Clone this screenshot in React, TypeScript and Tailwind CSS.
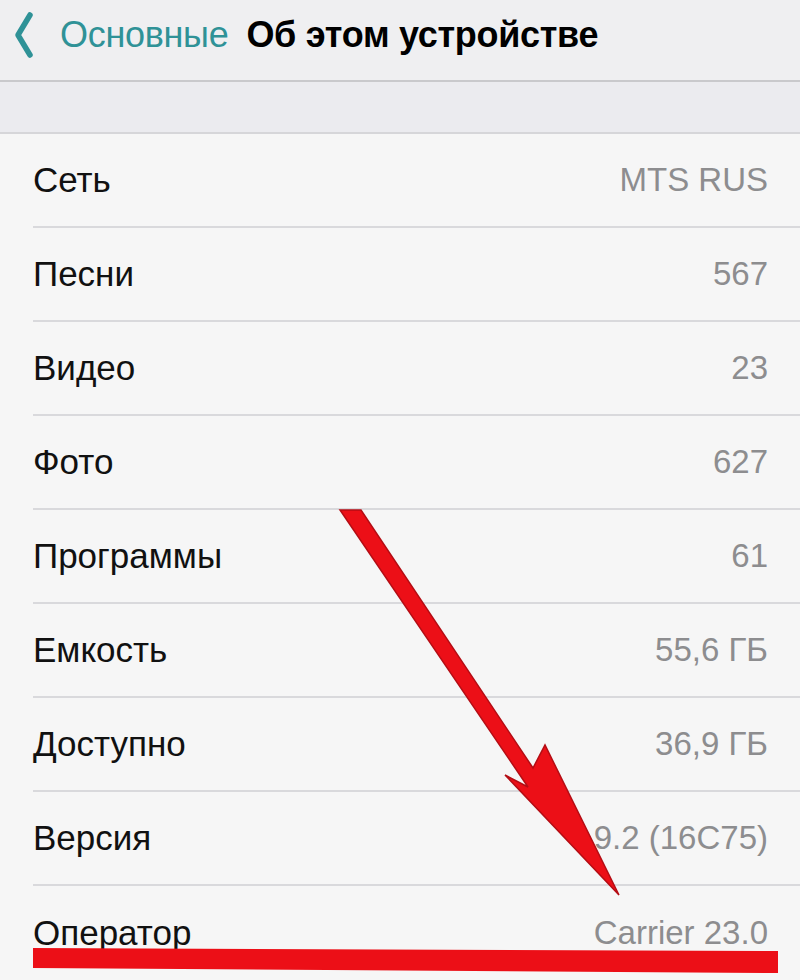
import React from 'react';

const rows: [string, string][] = [
  ['Сеть', 'MTS RUS'],
  ['Песни', '567'],
  ['Видео', '23'],
  ['Фото', '627'],
  ['Программы', '61'],
  ['Емкость', '55,6 ГБ'],
  ['Доступно', '36,9 ГБ'],
  ['Версия', '9.2 (16C75)'],
  ['Оператор', 'Carrier 23.0'],
];

export default function App() {
  return (
    <div className="relative w-[800px] h-[980px] overflow-hidden bg-[#f6f6f6] font-['Liberation_Sans',sans-serif]">
      {/* nav bar */}
      <div className="h-[82px] bg-[#efeff1] border-b-2 border-[#c9c9cc] flex items-center pl-[14px] pb-[10px]">
        <svg width="20" height="48" viewBox="0 0 20 48" className="mr-[26px]">
          <path d="M16 4 L4 24 L16 44" fill="none" stroke="#2f9297" strokeWidth="5.5" strokeLinecap="round" strokeLinejoin="round" />
        </svg>
        <span className="text-[36px] text-[#2f9297] tracking-[-0.3px]">Основные</span>
        <span className="ml-[18px] text-[36px] font-bold text-black tracking-[-0.3px]">Об этом устройстве</span>
      </div>

      {/* section gap */}
      <div className="h-[52px] bg-[#ebebef] border-b-2 border-[#d6d6d9]" />

      {/* list */}
      <div className="pl-[33px]">
        {rows.map(([label, value], i) => (
          <div
            key={label}
            className={`h-[94px] flex items-center justify-between pr-[32px] ${i < rows.length - 1 ? 'border-b-2 border-[#d9d9dc]' : ''}`}
          >
            <span className="text-[35px] text-[#111]">{label}</span>
            <span className="text-[33px] text-[#8d8d8f]">{value}</span>
          </div>
        ))}
      </div>

      {/* red annotation */}
      <svg className="absolute left-0 top-0 pointer-events-none" width="800" height="980" viewBox="0 0 800 980">
        <polygon
          points="340,510 361,510 533,768 545,745 619,895 505,775 528,787"
          fill="#ec0f17"
          stroke="#b40d14"
          strokeWidth="1.5"
          strokeLinejoin="miter"
        />
        <polygon points="33,948 778,951 778,973 33,968" fill="#ec0f17" />
      </svg>
    </div>
  );
}
